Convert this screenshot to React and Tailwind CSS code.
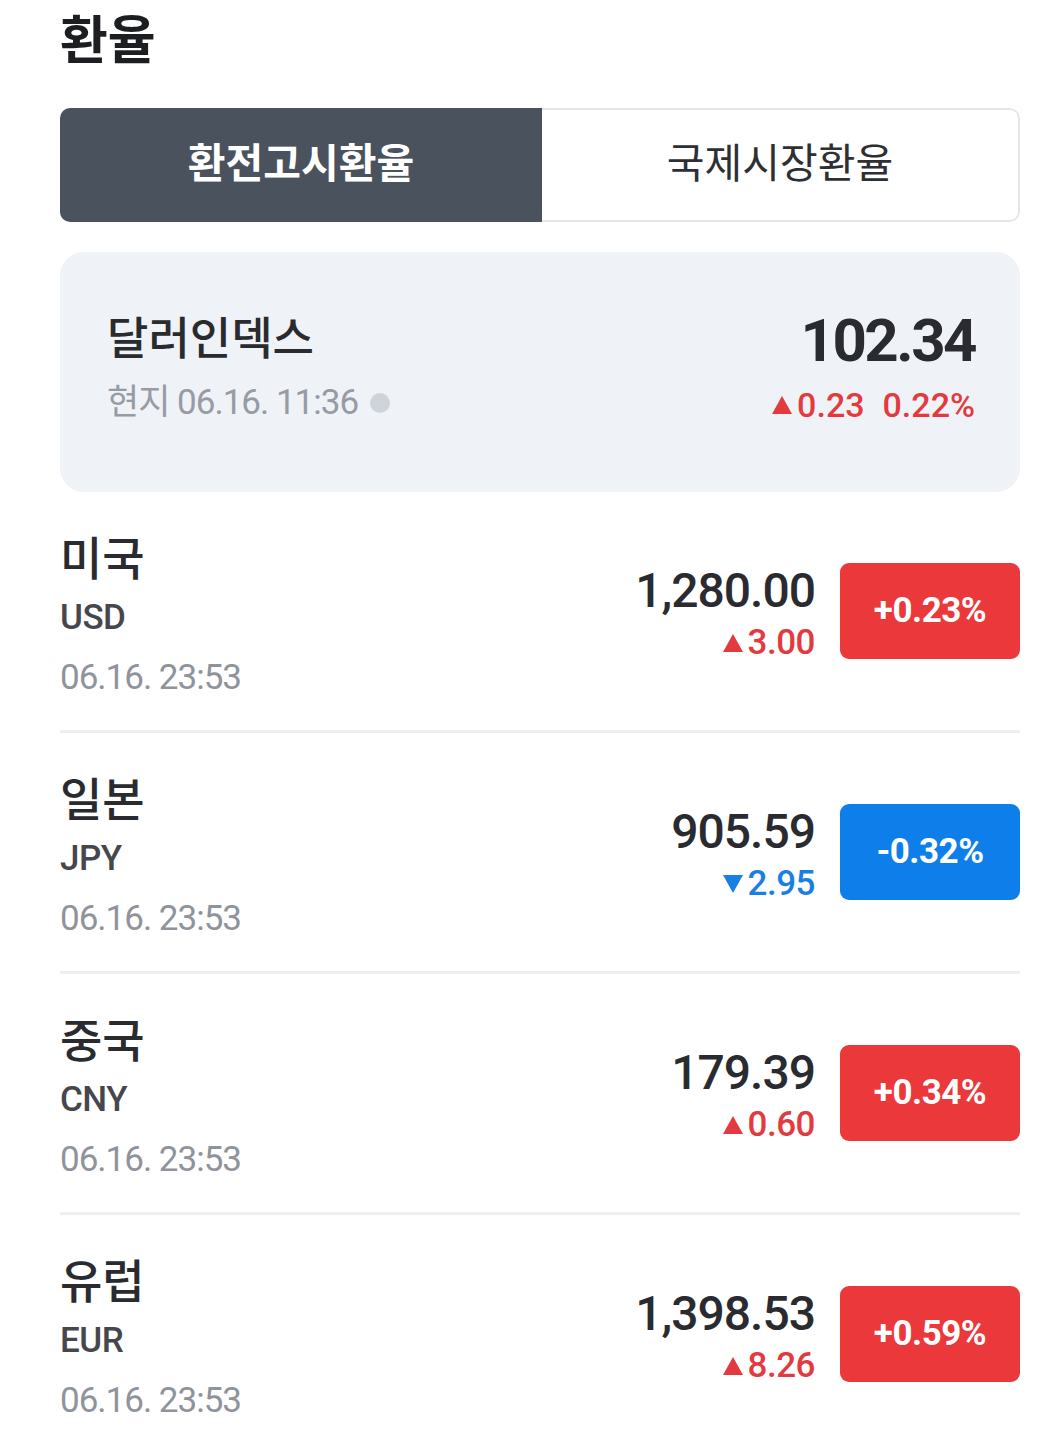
import React from "react";

const rows = [
  { name: "미국", code: "USD", time: "06.16. 23:53", price: "1,280.00", diff: "3.00", pct: "+0.23%", up: true },
  { name: "일본", code: "JPY", time: "06.16. 23:53", price: "905.59", diff: "2.95", pct: "-0.32%", up: false },
  { name: "중국", code: "CNY", time: "06.16. 23:53", price: "179.39", diff: "0.60", pct: "+0.34%", up: true },
  { name: "유럽", code: "EUR", time: "06.16. 23:53", price: "1,398.53", diff: "8.26", pct: "+0.59%", up: true },
];

function Arrow({ up }) {
  return up ? (
    <svg width="22" height="20" viewBox="0 0 22 20" className="mr-[4px]">
      <path d="M11 1 L21 19 L1 19 Z" fill="#e23a3e" />
    </svg>
  ) : (
    <svg width="22" height="20" viewBox="0 0 22 20" className="mr-[4px]">
      <path d="M1 1 L21 1 L11 19 Z" fill="#1a7fe2" />
    </svg>
  );
}

function RateRow({ r, last }) {
  return (
    <div
      className={`flex items-start justify-between pt-[40px] pb-[23px] ${
        last ? "" : "border-b-[3px] border-[#f0f0f2]"
      }`}
    >
      <div className="flex flex-col">
        <div className="text-[46px] leading-[54px] font-medium text-[#2a2b2f]">{r.name}</div>
        <div className="text-[35px] leading-[56px] font-medium text-[#46474c] mt-[4px] tracking-[-0.5px]">{r.code}</div>
        <div className="text-[35px] leading-[58px] text-[#8f939b] mt-[3px] tracking-[-1px]">{r.time}</div>
      </div>
      <div className="flex items-start gap-[25px] mt-[31px]">
        <div className="flex flex-col items-end">
          <div className="text-[48px] leading-[56px] font-medium text-[#2a2b30] tracking-[-1px]">{r.price}</div>
          <div
            className={`flex items-center text-[35px] leading-[48px] font-medium tracking-[-0.5px] ${
              r.up ? "text-[#e23a3e]" : "text-[#1a7fe2]"
            }`}
          >
            <Arrow up={r.up} />
            {r.diff}
          </div>
        </div>
        <div
          className={`w-[180px] h-[96px] rounded-[9px] flex items-center justify-center text-white text-[35px] font-bold tracking-[-0.5px] ${
            r.up ? "bg-[#ea383b]" : "bg-[#0e7fea]"
          }`}
        >
          {r.pct}
        </div>
      </div>
    </div>
  );
}

export default function App() {
  return (
    <div
      className="w-[1039px] min-h-[1441px] bg-white pl-[60px] pr-[19px] pt-[2px]"
      style={{ fontFamily: "Roboto, 'Noto Sans CJK KR', sans-serif" }}
    >
      <h1 className="text-[52px] leading-[80px] font-bold text-[#1d1e21]">환율</h1>

      <div className="mt-[26px] flex h-[114px] rounded-[10px] overflow-hidden">
        <div className="w-[482px] bg-[#4a525e] flex items-center justify-center text-white text-[41px] font-bold">
          환전고시환율
        </div>
        <div className="flex-1 border-2 border-l-0 border-[#e4e5e8] rounded-r-[10px] flex items-center justify-center text-[41px] text-[#2e2f33]">
          국제시장환율
        </div>
      </div>

      <div className="mt-[30px] h-[240px] rounded-[24px] bg-[#eff2f7] flex items-center justify-between pl-[47px] pr-[45px] pb-[4px]">
        <div className="flex flex-col">
          <div className="text-[45px] leading-[58px] font-medium text-[#2a2b2f]">달러인덱스</div>
          <div className="flex items-center text-[35px] leading-[54px] text-[#979ba3] mt-[7px]">
            <span className="tracking-[-1px]">현지 06.16. 11:36</span>
            <span className="ml-[12px] w-[20px] h-[20px] rounded-full bg-[#cfd3da] inline-block" />
          </div>
        </div>
        <div className="flex flex-col items-end">
          <div className="text-[60px] leading-[64px] font-bold text-[#2a2b30] tracking-[-2.5px]">102.34</div>
          <div className="flex items-center text-[34px] leading-[52px] font-medium text-[#e23a3e] mt-[6px]">
            <Arrow up />
            <span>0.23</span>
            <span className="ml-[18px]">0.22%</span>
          </div>
        </div>
      </div>

      <div className="flex flex-col">
        {rows.map((r, i) => (
          <RateRow key={r.code} r={r} last={i === rows.length - 1} />
        ))}
      </div>
    </div>
  );
}
